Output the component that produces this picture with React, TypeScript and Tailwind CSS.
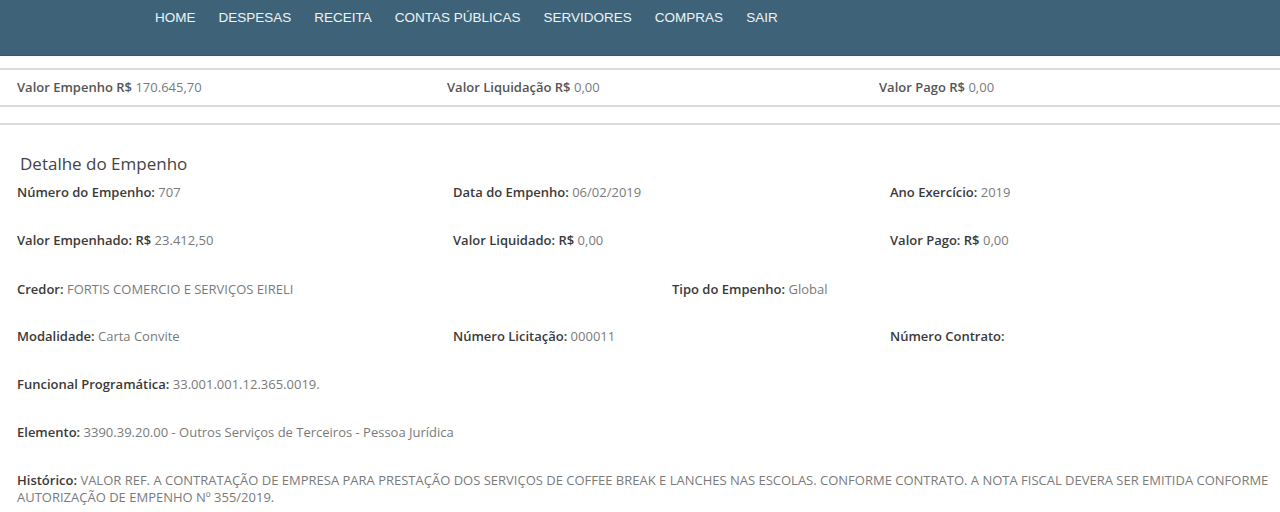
import React from "react";

const nav = ["HOME", "DESPESAS", "RECEITA", "CONTAS PÚBLICAS", "SERVIDORES", "COMPRAS", "SAIR"];

function F({ l, v }: { l: string; v?: string }) {
  return (
    <div>
      <span className="font-semibold text-[#3a3a3a]">{l}</span>
      {v !== undefined && <span className="font-normal text-[#7a7a7a]"> {v}</span>}
    </div>
  );
}

function FR({ l, r, v, c = "text-[#3a3a3a]" }: { l: string; r: string; v: string; c?: string }) {
  return (
    <div>
      <span className={"font-semibold " + c}>{l}</span>
      <span className={"font-semibold " + c}> {r}</span>
      <span className="font-normal text-[#7a7a7a]"> {v}</span>
    </div>
  );
}

export default function App() {
  return (
    <div
      className="w-[1280px] h-[512px] overflow-hidden bg-white text-[13px] leading-[18px]"
      style={{ fontFamily: '"Open Sans", "Noto Sans", sans-serif' }}
    >
      <header className="h-[56px] bg-[#3e6379] border-b border-[#37596d]">
        <nav
          className="flex pl-[155px] pt-[9px] gap-[23px] text-[13.5px] leading-[18px] text-[#eef3f6]"
          style={{ fontFamily: '"Liberation Sans", Arial, sans-serif' }}
        >
          {nav.map((n) => (
            <span key={n}>{n}</span>
          ))}
        </nav>
      </header>

      <div className="mt-[12px] border-t-2 border-[#dcdcdc]" />
      <div className="grid grid-cols-[430px_432px_1fr] pl-[17px] pt-[8px] pb-[9px]">
        <FR l="Valor Empenho" r="R$" v="170.645,70" c="text-[#555]" />
        <FR l="Valor Liquidação" r="R$" v="0,00" c="text-[#555]" />
        <FR l="Valor Pago" r="R$" v="0,00" c="text-[#555]" />
      </div>
      <div className="border-t-2 border-[#dcdcdc]" />
      <div className="mt-[16px] border-t-2 border-[#dcdcdc]" />

      <div className="pl-[20px] mt-[27px] text-[17px] leading-[24px] text-[#444]">Detalhe do Empenho</div>

      <div className="pl-[17px] pr-[4px] mt-[7px]">
        <div className="grid grid-cols-[436px_437px_1fr] mb-[30px]">
          <F l="Número do Empenho:" v="707" />
          <F l="Data do Empenho:" v="06/02/2019" />
          <F l="Ano Exercício:" v="2019" />
        </div>
        <div className="grid grid-cols-[436px_437px_1fr] mb-[31px]">
          <FR l="Valor Empenhado:" r="R$" v="23.412,50" />
          <FR l="Valor Liquidado:" r="R$" v="0,00" />
          <FR l="Valor Pago:" r="R$" v="0,00" />
        </div>
        <div className="grid grid-cols-[655px_1fr] mb-[29px]">
          <F l="Credor:" v="FORTIS COMERCIO E SERVIÇOS EIRELI" />
          <F l="Tipo do Empenho:" v="Global" />
        </div>
        <div className="grid grid-cols-[436px_437px_1fr] mb-[30px]">
          <F l="Modalidade:" v="Carta Convite" />
          <F l="Número Licitação:" v="000011" />
          <F l="Número Contrato:" />
        </div>
        <div className="mb-[30px]">
          <F l="Funcional Programática:" v="33.001.001.12.365.0019." />
        </div>
        <div className="mb-[31px]">
          <F l="Elemento:" v="3390.39.20.00 - Outros Serviços de Terceiros - Pessoa Jurídica" />
        </div>
        <div className="leading-[17px]">
          <F
            l="Histórico:"
            v="VALOR REF. A CONTRATAÇÃO DE EMPRESA PARA PRESTAÇÃO DOS SERVIÇOS DE COFFEE BREAK E LANCHES NAS ESCOLAS. CONFORME CONTRATO. A NOTA FISCAL DEVERA SER EMITIDA CONFORME AUTORIZAÇÃO DE EMPENHO Nº 355/2019."
          />
        </div>
      </div>
    </div>
  );
}
